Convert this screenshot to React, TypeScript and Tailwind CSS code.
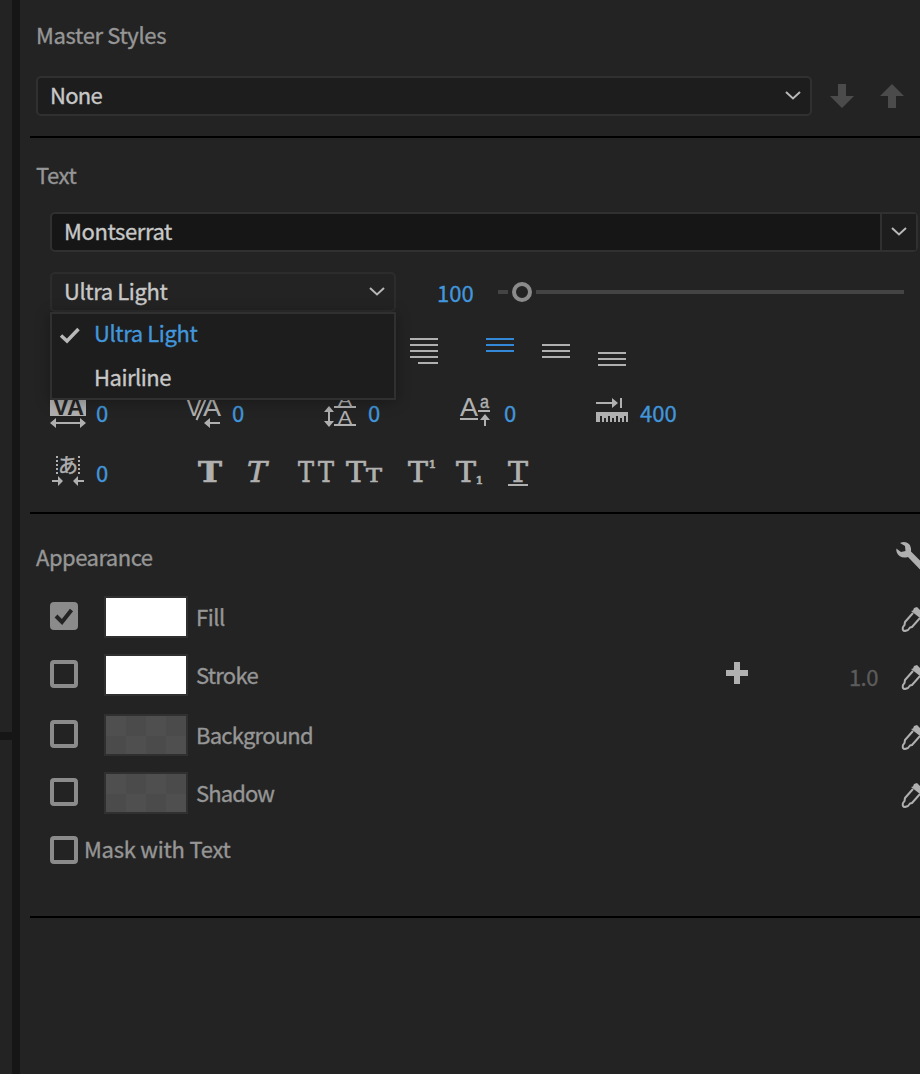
import React from 'react';
import { clsx } from 'clsx';

const Chevron: React.FC = () => (
  <svg width="18" height="12" viewBox="0 0 18 12" fill="none" className="shrink-0">
    <path d="M2 2 L9 8.5 L16 2" stroke="#b8b8b8" strokeWidth="2" />
  </svg>
);

const Divider: React.FC = () => <div className="ml-[10px] h-[2px] shrink-0 bg-black" />;

const Heading: React.FC<{ children: React.ReactNode; className?: string }> = ({ children, className }) => (
  <h2 className={clsx('h-6 leading-6 text-[#969696]', className)}>{children}</h2>
);

const GLYPH = '"DejaVu Serif", serif';
const SANS = '"Liberation Sans", sans-serif';

/* Icons of the spacing controls, all on a 40x36 canvas */
const TrackingIcon = () => (
  <svg width="40" height="36" viewBox="0 0 40 36" fill="#b0b0b0">
    <rect x="0" y="0" width="36" height="20" />
    <text x="3" y="19" fontFamily={SANS} fontSize="23" fontWeight="bold" fill="#232323" textLength="31" lengthAdjust="spacingAndGlyphs">VA</text>
    <path d="M0 27 L6 22 V26 H30 V22 L36 27 L30 32 V28 H6 V32 Z" />
  </svg>
);

const KerningIcon = () => (
  <svg width="40" height="36" viewBox="0 0 40 36" fill="#b0b0b0">
    <text x="0" y="20" fontFamily={SANS} fontSize="26" textLength="16" lengthAdjust="spacingAndGlyphs">V</text>
    <text x="17" y="20" fontFamily={SANS} fontSize="26" textLength="18" lengthAdjust="spacingAndGlyphs">A</text>
    <path d="M21 0 L10.5 24" stroke="#b0b0b0" strokeWidth="2" />
    <path d="M18 27 L24 22 V26 H34 V28 H24 V32 Z" />
  </svg>
);

const LeadingIcon = () => (
  <svg width="40" height="36" viewBox="0 0 40 36" fill="#b0b0b0">
    <path d="M7 10 L12 16 H8 V25 H12 L7 31 L2 25 H6 V16 H2 Z" />
    <text x="16" y="10" fontFamily={SANS} fontSize="17" textLength="14" lengthAdjust="spacingAndGlyphs">A</text>
    <rect x="12" y="10" width="22" height="2" />
    <text x="16" y="28" fontFamily={SANS} fontSize="19" textLength="14" lengthAdjust="spacingAndGlyphs">A</text>
    <rect x="12" y="28" width="22" height="2" />
  </svg>
);

const BaselineIcon = () => (
  <svg width="40" height="36" viewBox="0 0 40 36" fill="#b0b0b0">
    <text x="2" y="20" fontFamily={SANS} fontSize="26" textLength="18" lengthAdjust="spacingAndGlyphs">A</text>
    <rect x="2" y="22" width="18" height="2" />
    <text x="22" y="12" fontFamily={SANS} fontSize="18" stroke="#b0b0b0" strokeWidth="0.4" textLength="9" lengthAdjust="spacingAndGlyphs">a</text>
    <rect x="20" y="14" width="12" height="2" />
    <path d="M27 18 L32 24 H28 V30 H26 V24 H22 Z" />
  </svg>
);

const TabWidthIcon = () => (
  <svg width="40" height="36" viewBox="0 0 40 36" fill="#b0b0b0">
    <path d="M2 6 H18 V2 L24 7 L18 12 V8 H2 Z" />
    <rect x="26" y="2" width="2" height="10" />
    <path d="M2 16 H34 V26 H32 V20 H30 V26 H28 V22 H26 V26 H24 V20 H22 V26 H20 V22 H18 V26 H16 V20 H14 V26 H12 V22 H10 V26 H8 V20 H6 V26 H2 Z" />
  </svg>
);

const TsumeIcon = () => (
  <svg width="40" height="36" viewBox="0 0 40 36" fill="#b0b0b0">
    <path d="M7 0 V18 M29 0 V18" stroke="#b0b0b0" strokeWidth="2" strokeDasharray="2 2" />
    <text x="8" y="16.5" fontFamily='"Noto Sans CJK JP", sans-serif' fontSize="20" stroke="#b0b0b0" strokeWidth="0.5">あ</text>
    <path d="M2 24 H8 V20 L13 25 L8 30 V26 H2 Z" />
    <path d="M34 24 H28 V20 L23 25 L28 30 V26 H34 Z" />
  </svg>
);

const spacing = [
  { icon: <TrackingIcon />, value: '0' },
  { icon: <KerningIcon />, value: '0' },
  { icon: <LeadingIcon />, value: '0' },
  { icon: <BaselineIcon />, value: '0' },
  { icon: <TabWidthIcon />, value: '400' },
];

const Spacing: React.FC<{ icon: React.ReactNode; value: string }> = ({ icon, value }) => (
  <div className="flex w-[136px] items-start">
    {icon}
    <span className="ml-[6px] mt-1 leading-6 text-[#4297dc]">{value}</span>
  </div>
);

/* Faux style buttons: bold, italic, all caps, small caps, super/subscript, underline */
const FauxStyles = () => (
  <svg width="340" height="36" viewBox="0 0 340 36" fill="#b0b0b0" stroke="#b0b0b0" strokeWidth="0.7" fontFamily={GLYPH} fontSize="27">
    <text x="8" y="26" fontWeight="bold" textLength="24" lengthAdjust="spacingAndGlyphs">T</text>
    <text x="57" y="26" fontStyle="italic" textLength="20" lengthAdjust="spacingAndGlyphs">T</text>
    <text x="108" y="26" textLength="16" lengthAdjust="spacingAndGlyphs">T</text>
    <text x="128" y="26" textLength="16" lengthAdjust="spacingAndGlyphs">T</text>
    <text x="156" y="26" textLength="20" lengthAdjust="spacingAndGlyphs">T</text>
    <text x="176" y="26" fontSize="19" textLength="16" lengthAdjust="spacingAndGlyphs">T</text>
    <text x="218" y="26" textLength="20" lengthAdjust="spacingAndGlyphs">T</text>
    <text x="238.5" y="12" fontSize="11" textLength="8" lengthAdjust="spacingAndGlyphs">1</text>
    <text x="266" y="26" textLength="20" lengthAdjust="spacingAndGlyphs">T</text>
    <text x="285.5" y="28" fontSize="11" textLength="8" lengthAdjust="spacingAndGlyphs">1</text>
    <text x="318" y="26" textLength="20" lengthAdjust="spacingAndGlyphs">T</text>
    <rect x="318" y="28" width="20" height="2" stroke="none" />
  </svg>
);

const Lines: React.FC<{ className: string }> = ({ className }) => (
  <div className={clsx('flex w-7 flex-col gap-1', className)}>
    <div className="h-[2px] bg-current" />
    <div className="h-[2px] bg-current" />
    <div className="h-[2px] bg-current" />
  </div>
);

const Checkbox: React.FC<{ checked?: boolean }> = ({ checked }) =>
  checked ? (
    <div className="flex size-7 items-center justify-center rounded bg-[#8b8b8b]">
      <svg width="20" height="18" viewBox="0 0 20 18" fill="none">
        <path d="M2 9 L8 15 L17.5 3" stroke="#232323" strokeWidth="4" />
      </svg>
    </div>
  ) : (
    <div className="size-7 rounded border-4 border-[#8b8b8b]" />
  );

const Eyedropper = () => (
  <svg width="20" height="28" viewBox="0 0 20 28" fill="none" className="mt-[10px] shrink-0">
    <path d="M13 7 L5 16 L4.5 19 L3 21 Q2 25 5 25 L8 24 L10 21.5 L12 21 L20 12" stroke="#b0b0b0" strokeWidth="2" strokeLinejoin="round" />
    <path d="M11 5 L13 4.5 L14 2 L17 1 L20 4 V12 Z" fill="#b0b0b0" />
  </svg>
);

const Wrench = () => (
  <svg width="24" height="34" viewBox="0 0 24 34" fill="#b0b0b0">
    <path d="M4 3 Q9 0.5 13 4 Q15.5 7 15 11.5 L24 20.5 V29.5 L12 17 Q7 18.5 3.5 16 Q0 13 0.3 8.5 L5 12 L9.5 11 L9 6 Z" />
  </svg>
);

type Row = { label: string; checked?: boolean; solid?: boolean; width?: string; margin: string; tracking: string };

const rows: Row[] = [
  { label: 'Fill', checked: true, solid: true, margin: 'mt-[26px]', tracking: 'tracking-[-0.5px]' },
  { label: 'Stroke', solid: true, width: '1.0', margin: 'mt-4', tracking: 'tracking-[-0.75px]' },
  { label: 'Background', margin: 'mt-[18px]', tracking: 'tracking-[-0.75px]' },
  { label: 'Shadow', margin: 'mt-4', tracking: 'tracking-[-0.9px]' },
];

const AppearanceRow: React.FC<Row> = ({ label, checked, solid, width, margin, tracking }) => (
  <div className={clsx('flex h-[42px] items-start pl-[30px]', margin)}>
    <div className="mt-[6px]">
      <Checkbox checked={checked} />
    </div>
    <div
      className={clsx(
        'ml-[26px] h-[42px] w-[84px] border-2 border-[#303030]',
        solid
          ? 'bg-white'
          : 'bg-[conic-gradient(#4b4b4b_25%,#4f4f4f_0_50%,#4b4b4b_0_75%,#4f4f4f_0)] bg-[length:40px_40px]'
      )}
    />
    <span className={clsx('ml-2 mt-2 leading-6 text-[#969696]', tracking)}>{label}</span>
    <div className="ml-auto flex items-start">
      {width && (
        <>
          <svg width="22" height="22" viewBox="0 0 22 22" fill="#b0b0b0" className="mt-2">
            <path d="M8 0 H14 V8 H22 V14 H14 V22 H8 V14 H0 V8 H8 Z" />
          </svg>
          <span className="ml-[101px] mr-[23px] mt-[10px] w-7 leading-6 tracking-[-0.6px] text-[#5c5c5c]">{width}</span>
        </>
      )}
      <Eyedropper />
    </div>
  </div>
);

export default function App() {
  return (
    <div className="flex h-[1074px] w-[920px] overflow-hidden bg-[#161616] font-['Noto_Sans_CJK_SC','Noto_Sans',sans-serif] text-[22px] [-webkit-text-stroke-width:0.35px]">
      {/* Neighbouring panels */}
      <div className="mr-2 flex w-3 shrink-0 flex-col gap-2">
        <div className="h-[732px] bg-[#232323]" />
        <div className="flex-1 bg-[#232323]" />
      </div>

      <main className="flex min-w-0 flex-1 flex-col bg-[#232323]">
        {/* Master Styles */}
        <section className="h-[136px] pl-4 pt-[22px]">
          <Heading className="tracking-[-0.35px]">Master Styles</Heading>
          <div className="mt-[30px] flex items-center">
            <div className="flex h-10 w-[776px] items-center justify-between rounded-[5px] border-2 border-[#303030] bg-[#1d1d1d] pl-3 pr-2">
              <span className="-mt-1 leading-6 tracking-[-0.7px] text-[#c8c8c8]">None</span>
              <Chevron />
            </div>
            <svg width="24" height="24" viewBox="0 0 24 24" fill="#4b4b4b" className="ml-[18px]">
              <path d="M8 0 H16 V12 H24 L12 24 L0 12 H8 Z" />
            </svg>
            <svg width="24" height="24" viewBox="0 0 24 24" fill="#4b4b4b" className="ml-[26px]">
              <path d="M8 24 H16 V12 H24 L12 0 L0 12 H8 Z" />
            </svg>
          </div>
        </section>
        <Divider />

        {/* Text */}
        <section className="h-[374px] pl-[30px] pt-6">
          <Heading className="-ml-[14px] tracking-[-0.5px]">Text</Heading>
          <div className="mt-[26px] flex h-10 w-[868px] rounded-[5px] border-2 border-[#303030] bg-[#161616]">
            <span className="flex-1 pl-3 pt-[4px] leading-6 tracking-[-0.4px] text-[#c8c8c8]">Montserrat</span>
            <div className="flex w-9 items-center justify-center border-l-2 border-[#303030] bg-[#1d1d1d]">
              <Chevron />
            </div>
          </div>

          <div className="mt-5 flex h-10 items-center">
            <div className="relative h-10 w-[346px]">
              <div className="flex h-10 items-center justify-between rounded-[5px] border-2 border-[#2c2c2c] pl-3 pr-2">
                <span className="-mt-1 leading-6 tracking-[-0.4px] text-[#c8c8c8]">Ultra Light</span>
                <Chevron />
              </div>
              <div className="absolute left-0 top-10 z-10 flex h-[88px] w-[346px] flex-col gap-1 border-2 border-[#303030] bg-[#1d1d1d] shadow-[0_2px_14px_rgba(0,0,0,0.3)]">
                <div className="flex h-10 items-center">
                  <svg width="22" height="18" viewBox="0 0 22 18" fill="none" className="ml-[7px] mr-[13px] mt-[2px]">
                    <path d="M2 9.5 L8 15 L19.5 3" stroke="#b8b8b8" strokeWidth="3.5" />
                  </svg>
                  <span className="-mt-1 leading-6 tracking-[-0.4px] text-[#4297dc]">Ultra Light</span>
                </div>
                <div className="flex h-10 items-center pl-[42px]">
                  <span className="-mt-1 leading-6 tracking-[-0.5px] text-[#c8c8c8]">Hairline</span>
                </div>
              </div>
            </div>
            <span className="ml-[41px] w-[61px] leading-6 text-[#4297dc]">100</span>
            <div className="flex w-[406px] items-center">
              <div className="h-1 w-[10px] bg-[#444]" />
              <div className="ml-1 mr-1 size-5 rounded-full border-4 border-[#8b8b8b]" />
              <div className="h-1 flex-1 bg-[#444]" />
            </div>
          </div>

          {/* Paragraph and vertical alignment */}
          <div className="mt-[26px] flex h-[58px] items-start pl-[360px]">
            <div className="flex flex-col items-end gap-1 text-[#b0b0b0]">
              <div className="h-[2px] w-7 bg-current" />
              <div className="h-[2px] w-7 bg-current" />
              <div className="h-[2px] w-7 bg-current" />
              <div className="h-[2px] w-7 bg-current" />
              <div className="h-[2px] w-5 bg-current" />
            </div>
            <Lines className="ml-12 text-[#3488d8]" />
            <Lines className="ml-7 mt-[6px] text-[#b0b0b0]" />
            <Lines className="ml-7 mt-[14px] text-[#b0b0b0]" />
          </div>

          <div className="flex h-9">
            {spacing.map((item, i) => (
              <Spacing key={i} {...item} />
            ))}
          </div>
          <div className="mt-[24px] flex h-9 items-start">
            <div className="w-[140px]">
              <Spacing icon={<TsumeIcon />} value="0" />
            </div>
            <FauxStyles />
          </div>
        </section>
        <Divider />

        {/* Appearance */}
        <section className="h-[402px] pt-[26px]">
          <div className="flex h-[30px] items-start justify-between pl-4">
            <Heading className="mt-1 tracking-[-0.5px]">Appearance</Heading>
            <Wrench />
          </div>
          {rows.map((row) => (
            <AppearanceRow key={row.label} {...row} />
          ))}
          <div className="mt-[22px] flex items-start pl-[30px]">
            <Checkbox />
            <span className="ml-[6px] leading-6 tracking-[-0.25px] text-[#969696]">Mask with Text</span>
          </div>
        </section>
        <Divider />
      </main>
    </div>
  );
}
